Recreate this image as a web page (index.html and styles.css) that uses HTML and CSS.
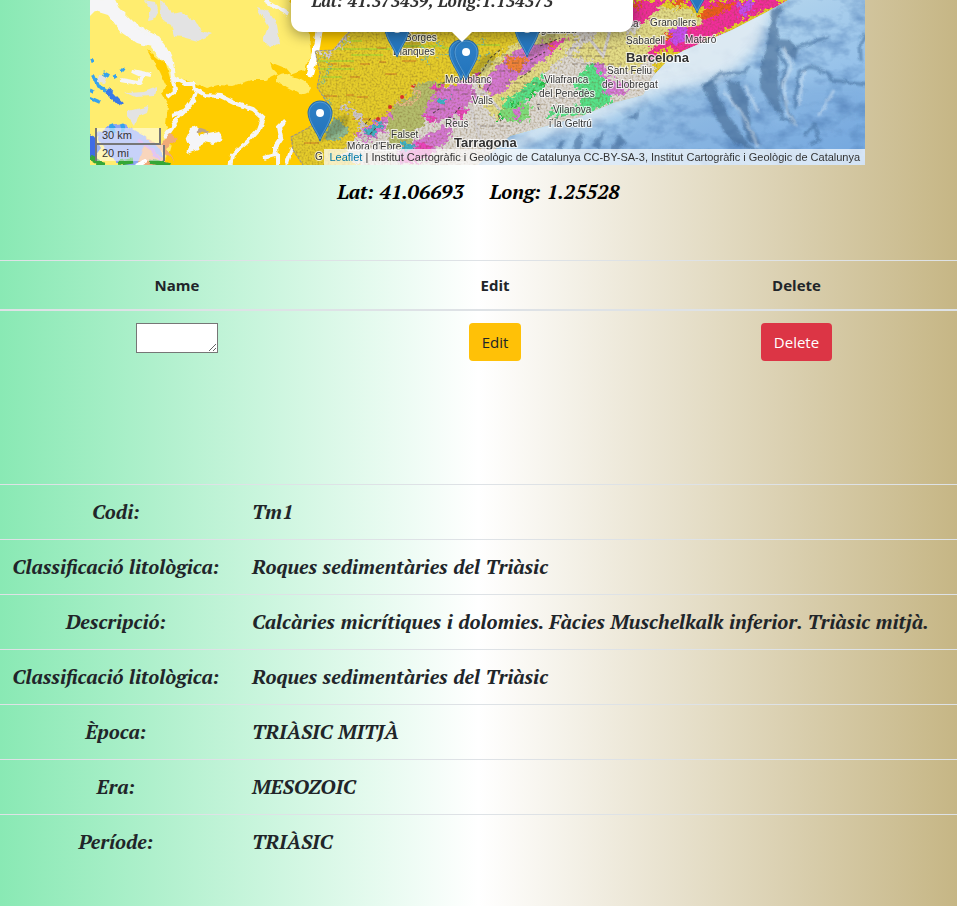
FILE: index.html
```html
<!DOCTYPE html>
<html lang="ca">
<head>
<meta charset="utf-8">
<meta name="viewport" content="width=device-width, initial-scale=1">
<title>Mapa geològic</title>
<link rel="stylesheet" href="styles.css">
</head>
<body>
<main>
  <section class="map" aria-label="Mapa geològic">
    <svg class="tiles" viewBox="90 0 775 165" preserveAspectRatio="none">
      <defs>
        <linearGradient id="pin" x1="0" y1="0" x2="0" y2="1"><stop offset="0" stop-color="#2e80c6"/><stop offset="1" stop-color="#2273bb"/></linearGradient>
        <linearGradient id="sea" x1="0" y1="0" x2="1" y2="1"><stop offset="0" stop-color="#d8e8f2"/><stop offset=".45" stop-color="#acd0ec"/><stop offset="1" stop-color="#78ade6"/></linearGradient>
        <filter id="rough" x="-5%" y="-5%" width="110%" height="110%" color-interpolation-filters="sRGB"><feTurbulence type="fractalNoise" baseFrequency=".22" numOctaves="3" seed="4"/><feDisplacementMap in="SourceGraphic" scale="14" xChannelSelector="R" yChannelSelector="G"/></filter>
        <filter id="edge" x="-5%" y="-5%" width="110%" height="110%" color-interpolation-filters="sRGB"><feTurbulence type="fractalNoise" baseFrequency=".13" numOctaves="2" seed="8"/><feDisplacementMap in="SourceGraphic" scale="5" xChannelSelector="R" yChannelSelector="G"/></filter>
        <filter id="grain" x="0" y="0" width="100%" height="100%" color-interpolation-filters="sRGB"><feTurbulence type="fractalNoise" baseFrequency=".5" numOctaves="2" seed="3"/><feColorMatrix values="0 0 0 0 .45  0 0 0 0 .35  0 0 0 0 .15  1 0 0 0 -.42"/><feComposite in2="SourceGraphic" operator="in"/></filter>
        <filter id="relief" x="0" y="0" width="100%" height="100%" color-interpolation-filters="sRGB"><feTurbulence type="fractalNoise" baseFrequency=".04 .06" numOctaves="4" seed="12"/><feColorMatrix values="0 0 0 0 .3  0 0 0 0 .48  0 0 0 0 .7  1.4 0 0 0 -.62"/><feComposite in2="SourceGraphic" operator="in"/></filter>
        <filter id="soft"><feGaussianBlur stdDeviation="6"/></filter>
        <filter id="fine"><feGaussianBlur stdDeviation="1"/></filter>
        <clipPath id="land"><path d="M352 28L342 38 333 50 315 51 320 73 317 87 327 103 320 118 308 128 291 137 293 150 303 165H480L510 136 550 125 580 117 613 103 643 95 653 76 670 58 685 50 732 30 765 13 788 0H352Z"/></clipPath>
        <clipPath id="water"><path d="M478 165L510 136 550 125 580 117 613 103 643 95 653 76 670 58 685 50 732 30 765 13 788 0H865V165Z"/></clipPath>
        <g id="marker"><path d="M0 0C-2-8-12-18-12-28A12 12 0 0 1 12-28C12-18 2-8 0 0Z" fill="url(#pin)" stroke="#2a6ca8" stroke-width="1"/><path d="M0-2C-3-10-11-19-11-28A11 11 0 0 1 11-28C11-19 3-10 0-2Z" fill="none" stroke="#5c9fd6" stroke-width=".8"/><circle cy="-28" r="4" fill="#fff"/></g>
        <path id="shade" d="M0 0L6-9Q14-25 26-26Q34-22 22-11Q14-4 0 0Z" fill="#26301c" opacity=".22" filter="url(#fine)"/>
      </defs>

      <rect x="90" width="300" height="165" fill="#ffed6f"/>
      <g filter="url(#edge)">
        <path d="M148 50L158 58 166 64 170 78 195 83 207 88 218 85 232 86 252 80 266 80 278 74 272 68 270 62 285 68 291 75 305 70 311 54 308 28 300 12 290 0H360V175H170L165 165 172 140 166 125 168 105 162 94 166 85 160 72Z" fill="#fc0"/>
        <path d="M277 76Q286 70 291 76Q305 78 311 88Q307 97 297 93L287 88 277 82Z" fill="#ffed6f"/>
        <path d="M85 0H113L118 10 132 24 149 34 158 38 165 48 171 61 173 78 185 84 194 84 195 89 205 95 220 96 237 104 253 109 263 118 259 129 247 142 232 155 230 168" fill="none" stroke="#f5f5f5" stroke-width="4"/>
        <path d="M88 0H111L119 12 134 27 150 36 160 39 169 51 172 65 165 64 151 47 137 43 122 33 108 15 95 11 88 18Z" fill="#f5f5f7"/>
        <path d="M196 92Q192 105 184 111L172 115M195 100L178 118 164 138M173 80L175 91 168 97" fill="none" stroke="#f5f5f7" stroke-width="4"/>
        <path d="M191 128L197 126 200 136 208 133 219 131 222 139 214 144 203 142 198 150 187 154 190 144 185 140Z" fill="#f5f5f7"/>
        <path d="M286 120L279 127 281 138 275 147 276 155 264 158M278 154V168M292 148L287 164" fill="none" stroke="#f5f5f7" stroke-width="4"/>
        <path d="M321 0L315 15 319 31 316 50 309 76" fill="none" stroke="#fff" stroke-width="7"/>
        <path d="M265 0L288 14M121 80L139 83 143 76 132 71 151 75" fill="none" stroke="#f5f5f7" stroke-width="4"/>
        <path d="M144 0L151 9 147 20 153 19 158 10 156 2ZM160 0L173 14 181 12 194 20 200 30 212 34 198 41 183 37 174 36 171 25 161 20ZM257 8L270 12 277 25 280 43 271 48 263 40 268 27ZM125 93L144 92 157 87 155 96 134 97ZM128 111L149 106 147 113 138 117 135 126 128 116ZM99 75L108 76 105 84 97 82Z" fill="#e3e3e3"/>
        <path d="M91 61L94 60M93 75L98 86 106 90M103 73L109 76M114 75L116 78M122 69L124 71M90 90L94 92M90 98L99 102" fill="none" stroke="#36a2ed" stroke-width="4"/>
        <path d="M107 90L121 105" stroke="#3979e6" stroke-width="5"/>
        <path d="M108 126L122 124 132 129 147 138 160 146 166 168H125L108 155 96 135Z" fill="#8fa5f3"/>
        <path d="M111 125L114 133M121 124L123 132" stroke="#36a2ed" stroke-width="4"/>
        <path d="M86 128L96 140 101 148 92 160H86Z" fill="#3e6ce5"/>
        <path d="M145 143L170 165H137ZM145 136L161 145 169 134 178 139 166 148 175 162Z" fill="#f0aa78"/>
        <path d="M138 140L150 148 160 160" fill="none" stroke="#c68be8" stroke-width="3"/>
        <path d="M90 157L105 166M119 163L132 161M150 161L171 166" stroke="#35a736" stroke-width="5"/>
        <path d="M134 167L147 160" stroke="#fff" stroke-width="4"/>
        <path d="M197 130L209 133" stroke="#baa38c" stroke-width="3"/>
      </g>

      <g clip-path="url(#land)">
        <rect x="285" width="510" height="165" fill="#e6cd2a"/>
        <g filter="url(#rough)">
          <path d="M347 20L340 42 315 55 318 44ZM370 172L340 155 355 137 372 128 420 100 450 85 500 78 528 36 655 20V170Z" fill="#ddd9d4"/>
          <path d="M480 70L536 26 580 35 560 60 530 84 498 120 484 106ZM570 55L600 30 665 35 635 72 600 64Z" fill="#e4dd88"/>
          <path d="M393 108L402 97 414 97 412 86 435 80 444 86 432 113 405 150 387 145 388 124Z" fill="#b4bd6c"/>
          <path d="M427 105L437 92 460 82 471 85 476 96 464 109 451 119 433 122 423 117ZM483 82L502 62 519 49 544 42 566 40 550 54 532 68 513 80 503 92 484 96ZM355 135L374 122 392 110 385 130 365 145ZM437 130L455 122 448 142 420 158 400 165 398 150Z" fill="#d577d3"/>
          <path d="M433 86L444 86 437 94ZM460 82L481 72 474 84ZM401 160L424 141 434 150 417 165ZM454 112L467 107 462 119ZM425 116L440 118 432 124ZM545 45L568 38 550 54Z" fill="#ea43bd"/>
          <path d="M506 59L518 56 531 58 518 72 507 70ZM546 42L555 41 548 52Z" fill="#f28238"/>
          <path d="M520 92L533 79 545 76 540 90 520 104 504 111 503 100ZM586 66L597 65 602 80 613 97 607 107 588 111 573 110 581 97 574 86ZM545 118L556 106 575 108 596 102 590 112 565 116Z" fill="#55e389"/>
          <path d="M503 108L522 101 532 107 526 121 510 122 498 116Z" fill="#7dde7a"/>
          <path d="M515 109L522 107 520 119 512 118ZM594 62L604 66 609 78 620 90 607 97 602 78ZM607 78L630 85 620 98Z" fill="#d678d8"/>
          <path d="M365 132L379 120 386 123 372 136ZM438 99L450 98 444 106ZM402 141L412 143 416 149 402 151Z" fill="#3cb2c8"/>
          <path d="M327 125L339 117 348 129 340 141 325 139Z" fill="#8fbb94"/>
          <path d="M497 112L502 118M512 106L520 103M528 98L536 92M540 88L546 82" stroke="#1fc44a" stroke-width="3"/>
        </g>
        <g filter="url(#rough)">
          <path d="M630 0H790L756 14 725 30 698 45 682 51 663 48 655 57 645 58 662 37 675 32 700 24 713 10 683 3 666 0 648 20 630 25Z" fill="#f22c9c"/>
          <path d="M670 29L685 24 690 39 679 46 668 40ZM740 3L755 0 750 13 738 17Z" fill="#c64bf0"/>
          <path d="M701 13L722 1 735 4 716 17 701 19ZM660 39L675 32 668 40ZM670 2L683 0 679 8ZM632 2L640 0 640 12Z" fill="#ee5b1c"/>
          <path d="M660 7L690 9 704 22 675 27 655 44 635 50 632 34Z" fill="#e0da88"/>
        </g>
        <path d="M330 49H390M318 61H354M320 69H354M321 77H342M400 46H444M351 55H383M442 48H460M345 41H362M470 45H500" stroke="#91df36" stroke-width="1"/>
        <path d="M328 64H337M341 66H350M360 64H370M379 62H386M402 61H416M323 96H337M346 95H354M357 97H368M304 143H319M352 119H370M377 48H386M350 77H360M385 74H397" stroke="#d07a23" stroke-width="1"/>
        <path d="M322 56L331 66 323 79 320 84M323 95L332 104M344 43L354 46M422 45L435 54 445 56 456 50M423 57L430 62M425 40L445 44M470 50L486 40M478 58L490 52" fill="none" stroke="#7fc0a4" stroke-width="2" stroke-dasharray="2 1" filter="url(#rough)"/>
        <g fill="#e62d28"><circle cx="402" cy="97" r="2"/><circle cx="390" cy="107" r="2"/><circle cx="378" cy="119" r="2"/><path d="M410 86L416 84 414 88Z"/></g>
        <path d="M350 30L341 43 326 56M340 109L347 106 354 112 361 119 361 133 367 140" fill="none" stroke="#cfc9cb" stroke-width="4" filter="url(#rough)"/>
        <path d="M395 105L417 101 419 92 411 86" fill="none" stroke="#e6b888" stroke-width="3" filter="url(#rough)"/>
        <path d="M500 110L483 91M470 105L484 151M570 50L588 37 603 56 610 30" fill="none" stroke="#d5d2d3" stroke-width="3"/>
        <path d="M435 90H461M462 94H484M430 109H450M501 55H538M494 63H539M490 71H530M505 83H541M480 126H510M563 40H585M570 48H617M568 56H610M572 64H622M512 91H530M550 98H600" stroke="#4c403e" stroke-width="1" stroke-dasharray="6 3" opacity=".5"/>
        <path d="M365 124L371 118M370 134L376 128M433 113L439 109M487 90L491 83M480 88L478 80M498 115L501 121M539 110Q535 102 541 105M550 120L558 118M570 111L579 107M626 42L630 47M448 117L455 119M455 113L460 107M463 126L467 130M500 50L490 58 482 72 470 82 450 80 436 86M540 46L560 38M530 60L545 52M520 78L532 70" fill="none" stroke="#302c30" stroke-width="1" stroke-dasharray="3 2" opacity=".8"/>
        <rect x="285" width="510" height="165" fill="#000" filter="url(#grain)"/>
      </g>
      <path d="M350 31L341 42 333 50 315 51 320 73 317 87 327 103 320 118 308 128 291 137 293 150 303 165" fill="none" stroke="#99918c" stroke-width="1" stroke-dasharray="3 1"/>

      <g clip-path="url(#water)">
        <rect x="478" width="387" height="165" fill="url(#sea)"/>
        <path d="M575 148L620 130 650 106 700 89 745 75 770 90 780 130 804 83 867 83V166H575Z" fill="#5588c3" opacity=".2" filter="url(#soft)"/>
        <rect x="478" width="387" height="165" fill="#000" filter="url(#relief)"/>
        <path d="M478 168L545 134 584 126 630 105 658 93 702 83 735 70 758 47 775 0H710L650 60 640 90 540 122Z" fill="#e4eef4" opacity=".85" filter="url(#soft)"/>
        <g filter="url(#edge)">
          <g filter="url(#fine)">
            <path d="M772 10L783 6 776 21 779 45 778 75 779 97 784 118 773 108 760 88 761 64 768 38ZM702 84L713 80 720 99 728 116 739 130 748 144 762 152 737 145 723 130 713 112ZM726 79L739 83 748 99 751 128 761 145 747 140 741 116 731 98ZM777 39L791 40 798 49 795 61 779 46Z" fill="#3f6690" opacity=".6"/>
            <path d="M777 47L786 66 780 92 793 122 781 117M812 66L799 71 794 109M809 67Q828 70 832 80L867 85M791 49L812 42 828 37M704 87L720 73 744 73 748 66M805 136L814 124 819 140 809 145M865 34L860 44 861 61" fill="none" stroke="#416a98" stroke-width="3" opacity=".6"/>
            <path d="M556 146L564 139 562 151ZM572 148L579 132 583 136 580 151ZM591 146L605 129 600 149ZM610 150L619 133 625 142 617 151ZM626 119L641 110 636 120Z" fill="#466c99" opacity=".6"/>
            <path d="M783 48L792 66 784 83 787 113 796 126M724 91L746 120 758 147M745 85L758 112M804 70L799 105M834 90L818 117M702 34L675 67M690 65L653 74" fill="none" stroke="#e3eff6" stroke-width="2" opacity=".6"/>
            <path d="M660 126L687 107M654 140L689 121M650 151L707 136M792 107L840 100M809 111L860 119M832 128L862 104M800 124L854 134" fill="none" stroke="#709cce" opacity=".6"/>
          </g>
        </g>
      </g>

      <use href="#shade" x="397" y="57"/><use href="#shade" x="466" y="80"/><use href="#shade" x="527" y="57"/><use href="#shade" x="320" y="141"/>
      <g class="place">
        <text x="405" y="41">Borges</text><text x="393" y="55">Blanques</text><text x="538" y="33">Igualada</text><text x="445" y="83">Montblanc</text><text x="472" y="104">Valls</text><text x="445" y="127">Reus</text><text x="391" y="138">Falset</text><text x="347" y="150">Móra d'Ebre</text><text x="315" y="160">G</text><text x="544" y="83">Vilafranca</text><text x="539" y="97">del Penedès</text><text x="553" y="113">Vilanova</text><text x="549" y="127">i la Geltrú</text><text x="628" y="27">sa</text><text x="650" y="26">Granollers</text><text x="626" y="44">Sabadell</text><text x="685" y="43">Mataró</text><text x="607" y="74">Sant Feliu</text><text x="602" y="88">de Llobregat</text><text class="city" x="626" y="62">Barcelona</text><text class="city" x="454" y="147">Tarragona</text>
      </g>
      <use href="#marker" x="397" y="57"/><use href="#marker" x="697" y="13"/><use href="#marker" x="527" y="57"/><use href="#marker" x="461" y="80"/><use href="#marker" x="466" y="80"/><use href="#marker" x="320" y="141"/>
    </svg>
    <div class="scale"><span class="km">30 km</span><span class="mi">20 mi</span></div>
    <div class="popup">Lat: 41.373439, Long:1.134373</div>
    <div class="attribution"><a href="#">Leaflet</a> | Institut Cartogràfic i Geològic de Catalunya CC-BY-SA-3, Institut Cartogràfic i Geològic de Catalunya</div>
  </section>

  <p class="position"><span>Lat: 41.06693</span><span>Long: 1.25528</span></p>

  <table class="names">
    <thead><tr><th class="col-name">Name</th><th class="col-edit">Edit</th><th>Delete</th></tr></thead>
    <tbody><tr><td><textarea aria-label="Name"></textarea></td><td><button class="btn edit" type="button">Edit</button></td><td><button class="btn delete" type="button">Delete</button></td></tr></tbody>
  </table>

  <table class="geology">
    <tbody>
      <tr><th scope="row">Codi:</th><td>Tm1</td></tr>
      <tr><th scope="row">Classificació litològica:</th><td>Roques sedimentàries del Triàsic</td></tr>
      <tr><th scope="row">Descripció:</th><td>Calcàries micrítiques i dolomies. Fàcies Muschelkalk inferior. Triàsic mitjà.</td></tr>
      <tr><th scope="row">Classificació litològica:</th><td>Roques sedimentàries del Triàsic</td></tr>
      <tr><th scope="row">Època:</th><td>TRIÀSIC MITJÀ</td></tr>
      <tr><th scope="row">Era:</th><td>MESOZOIC</td></tr>
      <tr><th scope="row">Període:</th><td>TRIÀSIC</td></tr>
    </tbody>
  </table>
</main>
</body>
</html>
```
FILE: styles.css
```css
* { box-sizing: border-box; }
body {
  margin: 0;
  min-height: 100vh;
  background: linear-gradient(to right, #89e9b4, #fff 50%, #c6b685);
  color: #212529;
  font: 15px/24px "Segoe UI", "Open Sans", "Noto Sans", sans-serif;
}

.map {
  position: relative;
  width: 81%;
  margin-left: 9.4%;
  overflow: hidden;
}
.tiles { display: block; width: 100%; }
.place {
  font-family: "Liberation Sans Narrow", "Liberation Sans", sans-serif;
  font-size: 10px;
  fill: #333;
  stroke: #fff;
  stroke-width: 2px;
  stroke-opacity: .75;
  paint-order: stroke;
}
.place .city { font-size: 13px; font-weight: bold; }

.popup {
  position: absolute;
  bottom: 133px;
  left: 26%;
  width: 44%;
  padding: 19px 20px;
  border-radius: 12px;
  background: #fff;
  box-shadow: 0 3px 14px rgba(0, 0, 0, .4);
  color: #333;
  font: italic bold 17px/24px "PT Serif", "Liberation Serif", serif;
}
.popup::after {
  content: "";
  position: absolute;
  top: 100%;
  left: 50%;
  margin-left: -10px;
  border: 10px solid transparent;
  border-bottom: 0;
  border-top-color: #fff;
}

.scale {
  position: absolute;
  bottom: 4px;
  left: 5px;
  color: #333;
  font: 11px/16px "Liberation Sans", sans-serif;
}
.scale span {
  display: block;
  padding: 0 5px;
  border: 2px solid #777;
  border-top: 0;
  background: rgba(255, 255, 255, .5);
}
.scale .km { width: 66px; line-height: 15px; }
.scale .mi { width: 70px; border-bottom: 0; }

.attribution {
  position: absolute;
  right: 0;
  bottom: 0;
  padding: 0 5px;
  background: rgba(255, 255, 255, .7);
  color: #333;
  font: 11px/16px "Liberation Sans", sans-serif;
  white-space: nowrap;
}
.attribution a { color: #0078a8; text-decoration: none; }

.position {
  display: flex;
  justify-content: center;
  gap: 26px;
  margin: 12px 0 53px;
  color: #000;
  font: italic bold 20px/30px "PT Serif", "Liberation Serif", serif;
}

table { width: 100%; border-spacing: 0; }
th, td { padding: 12px; border-top: 1px solid #dee2e6; vertical-align: top; }

.names { table-layout: fixed; margin-bottom: 111px; font-size: 15px; text-align: center; }
.names thead th { border-bottom: 2px solid #dee2e6; }
.names tbody td { border-top: 0; }
.col-name { width: 37%; }
.col-edit { width: 295px; }
.names textarea {
  display: block;
  width: 82px;
  height: 30px;
  margin: 0 auto;
  border: 1px solid #767676;
  background: #fff;
}
.col-name { width: 354px; }
.col-edit { width: 282px; }
.btn {
  padding: 6px 12px;
  border: 1px solid transparent;
  border-radius: 4px;
  font: inherit;
}
.edit { background: #ffc107; color: #212529; }
.delete { background: #dc3545; color: #fff; }

.geology { font: italic bold 20px/30px "PT Serif", "Liberation Serif", serif; }
.geology th { width: 232px; text-align: center; white-space: nowrap; }
.geology td { padding-left: 20px; }
```
